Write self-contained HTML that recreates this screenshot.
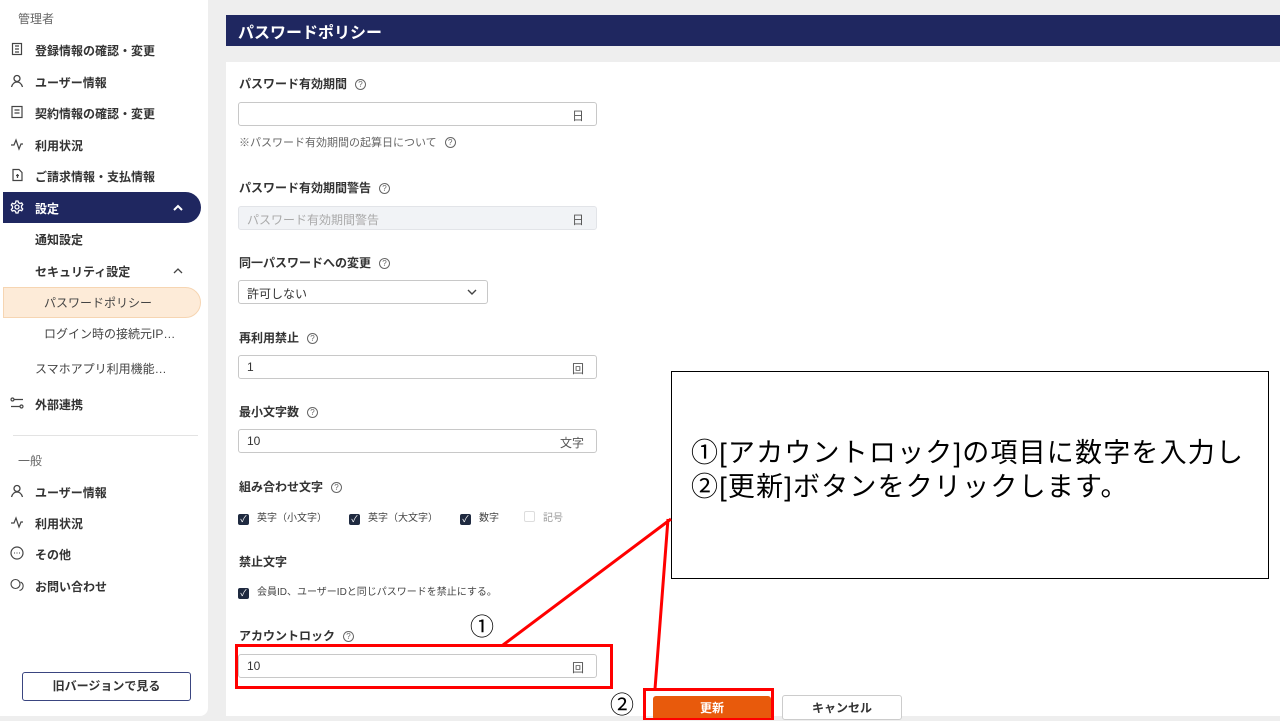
<!DOCTYPE html>
<html><head><meta charset="utf-8"><style>
*{box-sizing:border-box;margin:0;padding:0}
body{width:1280px;height:720px;overflow:hidden;background:#eeeeee;font-family:"Liberation Sans","Noto Sans CJK JP",sans-serif;position:relative;color:#333}
.side{position:absolute;left:0;top:0;width:208px;height:716px;background:#fff;border-radius:0 0 8px 0}
.s{position:absolute;font-size:12px;font-weight:bold;color:#333;white-space:nowrap}
.g{position:absolute;font-size:12px;color:#666}
.ic{position:absolute;left:10px;width:14px;height:14px}
.active{position:absolute;left:3px;top:192px;width:198px;height:31px;background:#1f2760;border-radius:0 16px 16px 0}
.pw{position:absolute;left:3px;top:287px;width:198px;height:31px;background:#fdebd8;border:1px solid #f6d5b2;border-radius:0 16px 16px 0}
.hdr{position:absolute;left:226px;top:15px;width:1054px;height:31px;background:#1f2760;color:#fff;font-size:16px;font-weight:bold;padding:4px 12px}
.card{position:absolute;left:226px;top:62px;width:1054px;height:654px;background:#fff}
.lb{position:absolute;left:239px;font-size:12px;font-weight:bold;color:#333;white-space:nowrap}
.q{display:inline-block;width:11px;height:11px;border:1px solid #666;border-radius:50%;font-size:8px;text-align:center;line-height:9px;margin-left:8px;vertical-align:1px;font-weight:normal;color:#666}
.in{position:absolute;left:238px;height:24px;border:1px solid #c8c8c8;border-radius:3px;background:#fff;font-size:12px;padding:4px 8px;color:#333}
.in .r{position:absolute;right:12px;top:4px;color:#555}
.cb{display:inline-block;width:11px;height:11px;background:#1f2a40;border-radius:2px;color:#fff;font-size:9px;line-height:11px;text-align:center;vertical-align:-1px;margin-right:8px}
.sm{position:absolute;font-size:10px;color:#444;white-space:nowrap}
</style></head><body>
<div class="side">
<div class="g" style="left:18px;top:10px">管理者</div>
<svg class="ic" style="top:42px" viewBox="0 0 14 14" fill="none" stroke="#444" stroke-width="1.2"><rect x="2.5" y="1.5" width="9" height="11"/><path d="M5 4h4M5 7h4M5 10h4"/></svg>
<div class="s" style="left:35px;top:42px">登録情報の確認・変更</div>
<svg class="ic" style="top:74px" viewBox="0 0 14 14" fill="none" stroke="#444" stroke-width="1.3"><circle cx="7" cy="4.5" r="3"/><path d="M1.5 13c1-3.5 3-5 5.5-5s4.5 1.5 5.5 5"/></svg>
<div class="s" style="left:35px;top:74px">ユーザー情報</div>
<svg class="ic" style="top:105px" viewBox="0 0 14 14" fill="none" stroke="#444" stroke-width="1.2"><rect x="2" y="1.5" width="10" height="11"/><path d="M4.5 5h5M4.5 8h5"/></svg>
<div class="s" style="left:35px;top:105px">契約情報の確認・変更</div>
<svg class="ic" style="top:137px" viewBox="0 0 14 14" fill="none" stroke="#444" stroke-width="1.2"><path d="M1 8h3l2-5 3 9 2-5h2"/></svg>
<div class="s" style="left:35px;top:137px">利用状況</div>
<svg class="ic" style="top:168px" viewBox="0 0 14 14" fill="none" stroke="#444" stroke-width="1.2"><path d="M3 1.5h6l3 3v8H3z"/><path d="M7.5 6v4M6 7.5h3"/></svg>
<div class="s" style="left:35px;top:168px">ご請求情報・支払情報</div>
<div class="active"></div>
<svg class="ic" style="top:200px" viewBox="0 0 14 14" fill="none" stroke="#fff" stroke-width="1.3"><circle cx="7" cy="7" r="2"/><path d="M6 1h2l.5 1.7 1.5.8 1.7-.6 1 1.7-1.2 1.3v1.8l1.2 1.3-1 1.7-1.7-.6-1.5.8L8 13H6l-.5-1.7-1.5-.8-1.7.6-1-1.7 1.2-1.3V6.3L1.3 5l1-1.7 1.7.6 1.5-.8z"/></svg>
<div class="s" style="left:35px;top:200px;color:#fff">設定</div>
<svg style="position:absolute;left:172px;top:204px" width="12" height="8" viewBox="0 0 12 8" fill="none" stroke="#fff" stroke-width="2"><path d="M2 6l4-4 4 4"/></svg>
<div class="s" style="left:35px;top:231px">通知設定</div>
<div class="s" style="left:35px;top:263px">セキュリティ設定</div>
<svg style="position:absolute;left:172px;top:267px" width="12" height="8" viewBox="0 0 12 8" fill="none" stroke="#444" stroke-width="1.3"><path d="M2 6l4-4 4 4"/></svg>
<div class="pw"></div>
<div class="g" style="left:44px;top:294px;color:#444">パスワードポリシー</div>
<div class="g" style="left:44px;top:325px;color:#444">ログイン時の接続元IP…</div>
<div class="g" style="left:35px;top:360px;color:#444">スマホアプリ利用機能…</div>
<svg class="ic" style="top:396px" viewBox="0 0 14 14" fill="none" stroke="#444" stroke-width="1.2"><path d="M4 3.5h9M1 10.5h9"/><circle cx="2.5" cy="3.5" r="1.5"/><circle cx="11.5" cy="10.5" r="1.5"/></svg>
<div class="s" style="left:35px;top:396px">外部連携</div>
<div style="position:absolute;left:13px;top:435px;width:185px;height:1px;background:#e3e3e3"></div>
<div class="g" style="left:18px;top:452px">一般</div>
<svg class="ic" style="top:484px" viewBox="0 0 14 14" fill="none" stroke="#444" stroke-width="1.3"><circle cx="7" cy="4.5" r="3"/><path d="M1.5 13c1-3.5 3-5 5.5-5s4.5 1.5 5.5 5"/></svg>
<div class="s" style="left:35px;top:484px">ユーザー情報</div>
<svg class="ic" style="top:515px" viewBox="0 0 14 14" fill="none" stroke="#444" stroke-width="1.2"><path d="M1 8h3l2-5 3 9 2-5h2"/></svg>
<div class="s" style="left:35px;top:515px">利用状況</div>
<svg class="ic" style="top:546px" viewBox="0 0 14 14" fill="none" stroke="#444" stroke-width="1.2"><circle cx="7" cy="7" r="6"/><path d="M4 7h.8M6.6 7h.8M9.2 7h.8"/></svg>
<div class="s" style="left:35px;top:546px">その他</div>
<svg class="ic" style="top:578px" viewBox="0 0 14 14" fill="none" stroke="#444" stroke-width="1.1"><circle cx="5.5" cy="6" r="4.5"/><path d="M10.5 4a4.5 4.5 0 0 1-1 8.5"/></svg>
<div class="s" style="left:35px;top:578px">お問い合わせ</div>
<div style="position:absolute;left:22px;top:672px;width:169px;height:29px;border:1px solid #3a4580;border-radius:3px;font-size:12px;font-weight:bold;text-align:center;line-height:27px">旧バージョンで見る</div>
</div>
<div class="hdr">パスワードポリシー</div>
<div class="card"></div>
<div class="lb" style="top:75px">パスワード有効期間<span class="q">?</span></div>
<div class="in" style="top:102px;width:359px"><span class="r">日</span></div>
<div class="g" style="left:239px;top:134px;font-size:11px">※パスワード有効期間の起算日について<span class="q">?</span></div>
<div class="lb" style="top:179px">パスワード有効期間警告<span class="q">?</span></div>
<div class="in" style="top:206px;width:359px;background:#f1f3f6;border-color:#e2e4e8;color:#aaa">パスワード有効期間警告<span class="r">日</span></div>
<div class="lb" style="top:254px">同一パスワードへの変更<span class="q">?</span></div>
<div class="in" style="top:280px;width:250px">許可しない<svg style="position:absolute;right:9px;top:7px" width="12" height="8" viewBox="0 0 12 8" fill="none" stroke="#444" stroke-width="1.4"><path d="M2 2l4 4 4-4"/></svg></div>
<div class="lb" style="top:329px">再利用禁止<span class="q">?</span></div>
<div class="in" style="top:355px;width:359px">1<span class="r">回</span></div>
<div class="lb" style="top:403px">最小文字数<span class="q">?</span></div>
<div class="in" style="top:429px;width:359px">10<span class="r">文字</span></div>
<div class="lb" style="top:478px">組み合わせ文字<span class="q">?</span></div>
<div class="sm" style="left:238px;top:509px"><span class="cb">✓</span>英字（小文字）</div>
<div class="sm" style="left:349px;top:509px"><span class="cb">✓</span>英字（大文字）</div>
<div class="sm" style="left:460px;top:509px"><span class="cb">✓</span>数字</div>
<div class="sm" style="left:524px;top:509px;color:#999"><span class="cb" style="background:#fff;border:1px solid #ddd"></span>記号</div>
<div class="lb" style="top:553px">禁止文字</div>
<div class="sm" style="left:238px;top:583px"><span class="cb">✓</span>会員ID、ユーザーIDと同じパスワードを禁止にする。</div>
<div class="lb" style="top:627px">アカウントロック<span class="q">?</span></div>
<div class="in" style="top:654px;width:359px">10<span class="r">回</span></div>
<div style="position:absolute;left:653px;top:696px;width:118px;height:24px;background:#e85a0c;border-radius:3px;color:#fff;font-size:12px;font-weight:bold;text-align:center;line-height:24px">更新</div>
<div style="position:absolute;left:782px;top:695px;width:120px;height:25px;background:#fff;border:1px solid #ccc;border-radius:3px;font-size:12px;font-weight:bold;text-align:center;line-height:25px">キャンセル</div>
<div style="position:absolute;left:671px;top:371px;width:598px;height:208px;background:#fff;border:1px solid #000"></div>
<div style="position:absolute;left:691px;top:436px;font-size:27px;letter-spacing:1.2px;line-height:34px;color:#000;white-space:nowrap">①[アカウントロック]の項目に数字を入力し<br>②[更新]ボタンをクリックします。</div>
<div style="position:absolute;left:470px;top:607px;font-size:24px;color:#000">①</div>
<div style="position:absolute;left:610px;top:685px;font-size:24px;color:#000">②</div>
<svg style="position:absolute;left:0;top:0" width="1280" height="720" fill="none" stroke="#f00" stroke-width="3">
<rect x="236.5" y="645.5" width="375" height="42"/>
<rect x="644.5" y="689.5" width="128" height="30"/>
<path d="M503 645L671 519M655 689L668 519"/>
</svg>
</body></html>
